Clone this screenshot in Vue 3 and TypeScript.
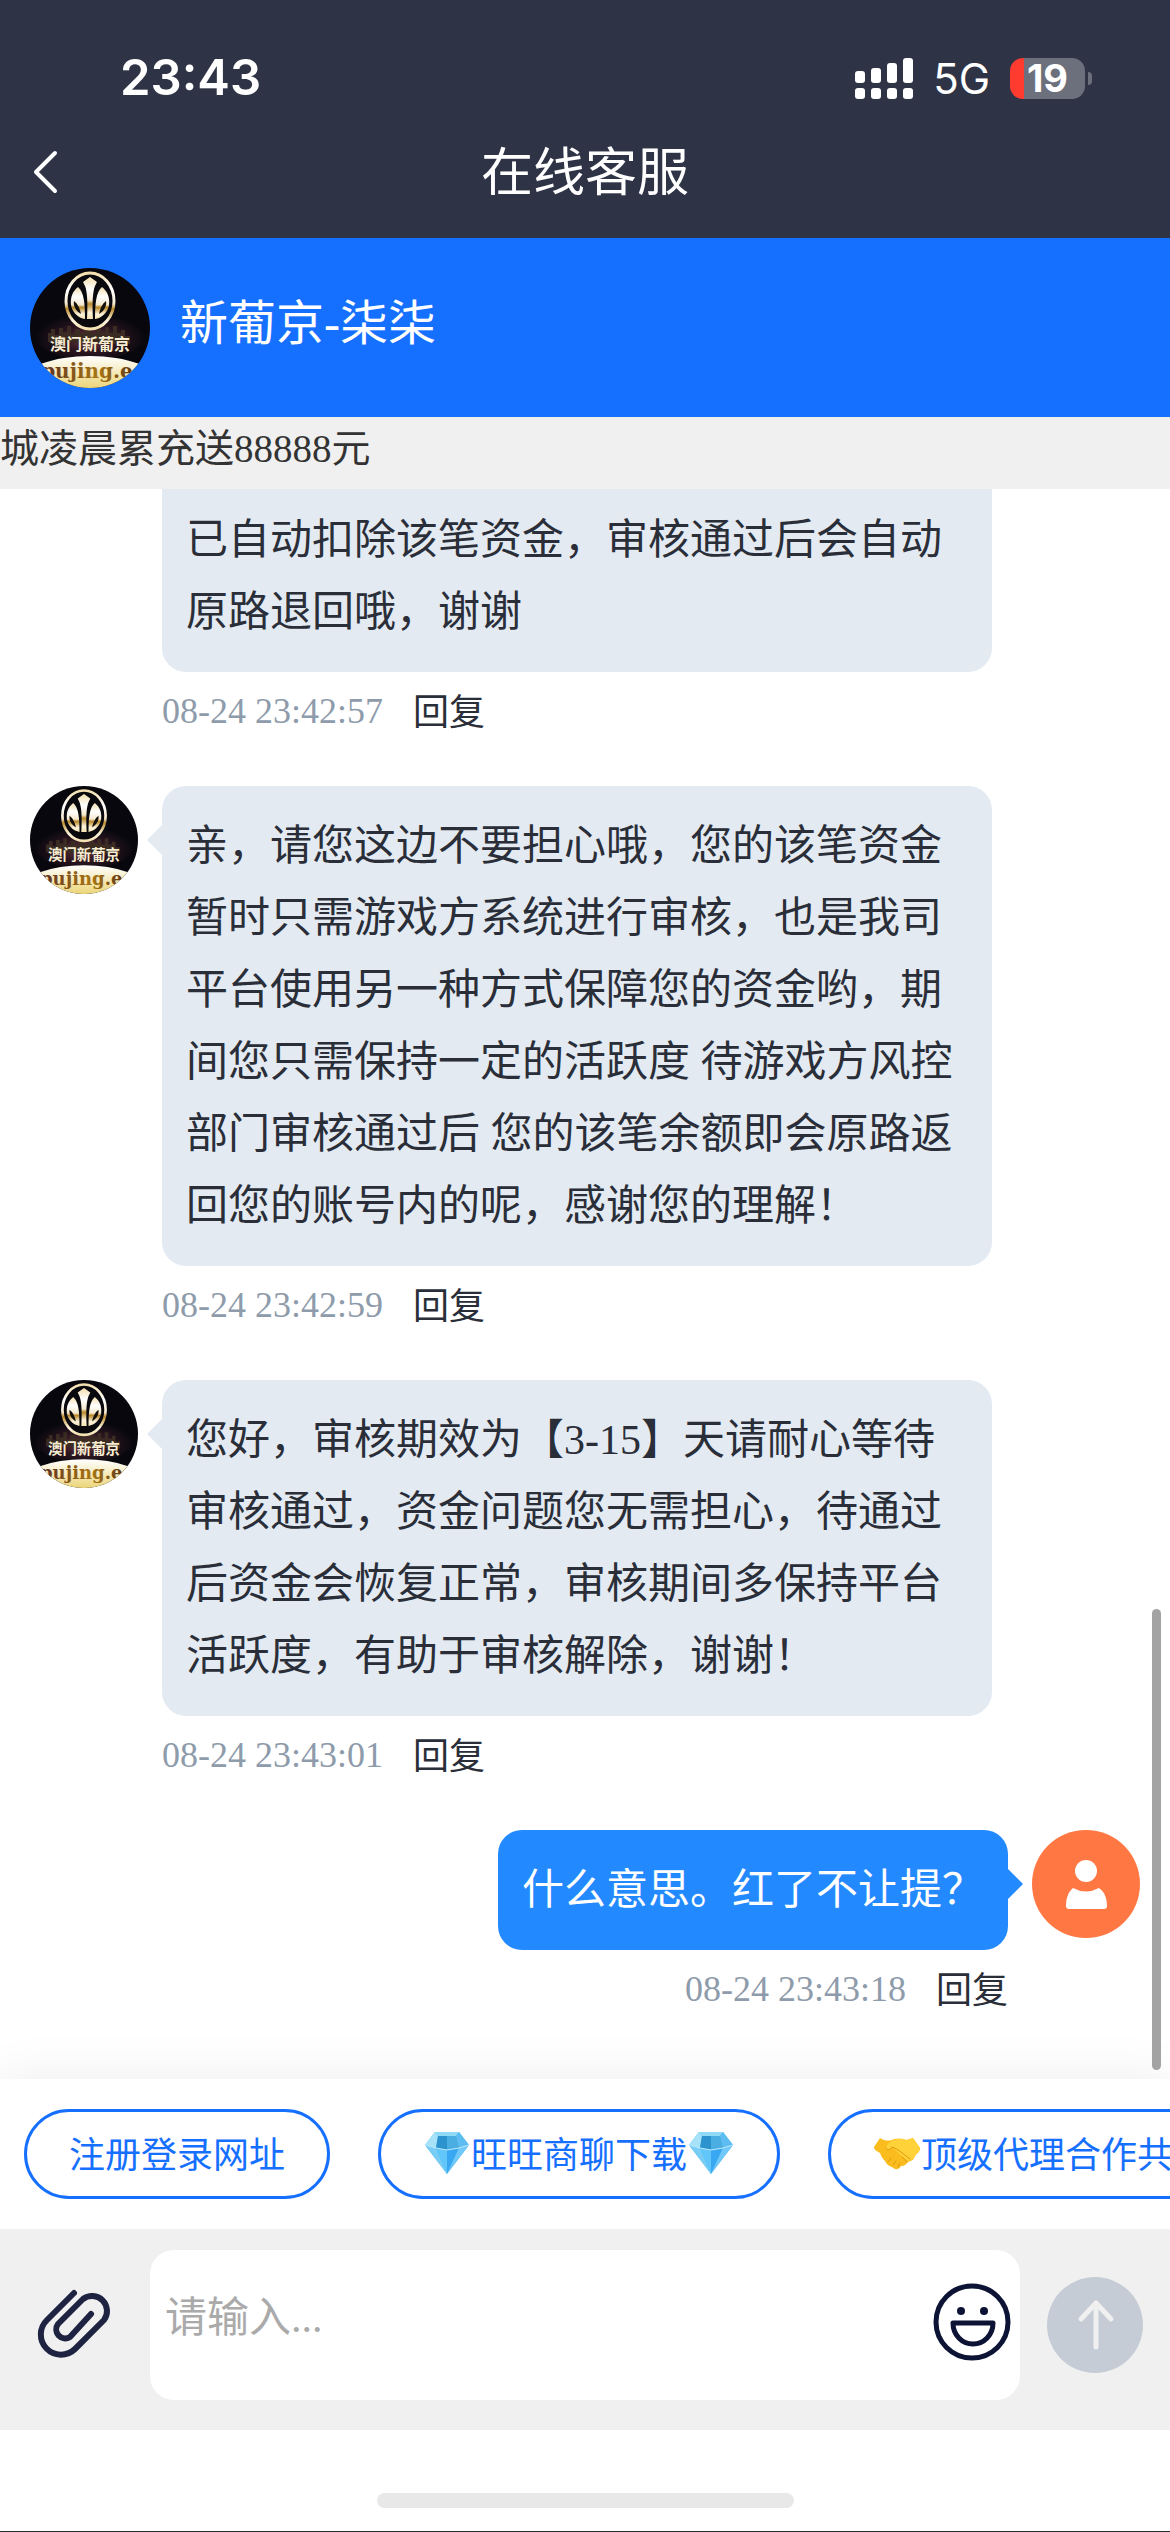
<script setup lang="ts">
import { ref } from 'vue'

interface Message {
  id: number
  own: boolean
  clipped?: boolean
  text: string
  time: string
}

const messages: Message[] = [
  { id: 1, own: false, clipped: true, text: '已自动扣除该笔资金，审核通过后会自动原路退回哦，谢谢', time: '08-24 23:42:57' },
  {
    id: 2,
    own: false,
    text: '亲，请您这边不要担心哦，您的该笔资金暂时只需游戏方系统进行审核，也是我司平台使用另一种方式保障您的资金哟，期间您只需保持一定的活跃度 待游戏方风控部门审核通过后 您的该笔余额即会原路返回您的账号内的呢，感谢您的理解！',
    time: '08-24 23:42:59',
  },
  {
    id: 3,
    own: false,
    text: '您好，审核期效为【3-15】天请耐心等待审核通过，资金问题您无需担心，待通过后资金会恢复正常，审核期间多保持平台活跃度，有助于审核解除，谢谢！',
    time: '08-24 23:43:01',
  },
  { id: 4, own: true, text: '什么意思。红了不让提？', time: '08-24 23:43:18' },
]

const draft = ref('')
</script>

<template>
  <div class="page">
    <!-- Shared artwork -->
    <svg class="defs" aria-hidden="true">
      <defs>
        <linearGradient id="gold" x1="0" y1="0" x2="0" y2="1">
          <stop offset="0" stop-color="#f3dfae" />
          <stop offset="0.3" stop-color="#ffffff" />
          <stop offset="0.55" stop-color="#f6ead0" />
          <stop offset="0.64" stop-color="#b98a2c" />
          <stop offset="0.85" stop-color="#fdf4dc" />
          <stop offset="1" stop-color="#f3e2b0" />
        </linearGradient>
        <linearGradient id="dome" x1="0" y1="0" x2="0" y2="1">
          <stop offset="0" stop-color="#ffffff" />
          <stop offset="0.6" stop-color="#ecd67c" />
        </linearGradient>
        <linearGradient id="lettering" x1="0" y1="0" x2="1" y2="0">
          <stop offset="0" stop-color="#5a2c22" />
          <stop offset="0.55" stop-color="#a87612" />
          <stop offset="1" stop-color="#4a2418" />
        </linearGradient>
        <radialGradient id="glow" cx="0.5" cy="0.6" r="0.5">
          <stop offset="0" stop-color="#6b3540" />
          <stop offset="0.5" stop-color="#2c1620" />
          <stop offset="1" stop-color="#07070d" />
        </radialGradient>
        <clipPath id="disc"><circle cx="60" cy="60" r="60" /></clipPath>
        <symbol id="brand" viewBox="0 0 120 120">
          <g clip-path="url(#disc)">
            <rect width="120" height="120" fill="#07070d" />
            <ellipse cx="60" cy="66" rx="56" ry="26" fill="url(#glow)" />
            <path d="M18 74V65h3v-4h4v6h4v-7h4v4h4v-6h4v8h4v-5h5v4h5v-6h6v6h5v-4h5v3h4v-5h4v6h4v-7h4v7h4v-3h4v6h5v8z" fill="#3a2c22" />
            <ellipse cx="60" cy="33" rx="24" ry="28" fill="#08080d" stroke="url(#gold)" stroke-width="3" />
            <path d="M60 9l7 5-2 4c-2 5-3 15-2 33h-6c1-18 0-28-2-33l-2-4z" fill="url(#gold)" />
            <path d="M48 19c6 5 7 17 7 32-7-1-13-7-14-14-1-8 2-14 7-18z" fill="url(#gold)" />
            <path d="M72 19c-6 5-7 17-7 32 7-1 13-7 14-14 1-8-2-14-7-18z" fill="url(#gold)" />
            <path d="M44 33c4 3 6 8 7 13-5-3-8-8-7-13zM76 33c-4 3-6 8-7 13 5-3 8-8 7-13z" fill="#15100a" />
            <text x="60" y="82" class="brand-name">澳门新葡京</text>
            <ellipse cx="60" cy="114" rx="68" ry="26" fill="url(#dome)" />
            <text x="63" y="110" class="brand-site">pujing.ec</text>
          </g>
        </symbol>
        <symbol id="gem" viewBox="0 0 48 48">
          <path d="M12 4H36L46 17 24 46 2 17z" fill="#4db9f5" />
          <path d="M12 4H36L33 8H15z" fill="#8fd9f7" />
          <path d="M12 4L15 8 13 20 2 17z" fill="#a6e2f8" />
          <path d="M15 8H33L36 20 24 22 13 20z" fill="#2d93cf" />
          <path d="M24 8l9 0 3 12-12 2z" fill="#4aaee3" />
          <path d="M36 4L46 17 36 20 33 8z" fill="#5dbdf0" />
          <path d="M2 17l11 3 11 26z" fill="#77cdf6" />
          <path d="M13 20l11 2v24z" fill="#63c6fb" />
          <path d="M36 20l-12 2v24z" fill="#38a8f2" />
          <path d="M46 17l-10 3-12 26z" fill="#6fc8f7" />
          <path d="M2 17l11 3 11 2 12-2 10-3" fill="none" stroke="#bdeaff" stroke-width="1" />
        </symbol>
        <symbol id="handshake" viewBox="0 0 48 48">
          <path d="M1 19L7 10c5 3 8 3 12 2 4-2 9-1 14 0l7-2 7 10c0 4-3 5-5 8-1 4-4 5-7 6-3 4-5 4-7 4-3 5-7 3-9 1-4-1-6-4-7-6-3-3-4-5-5-8-3-2-6-3-6-6z" fill="#fbbd1e" />
          <path d="M34 12l6-2 7 10c0 4-3 5-5 8-1 3-4 5-7 5-6-5-12-10-16-14-2 3-5 4-6 1 1-4 4-7 8-8 5-2 8-1 13 0z" fill="#ffd23a" />
          <path d="M13 20c1 3 4 2 6-1 6 2 14 9 18 12" fill="none" stroke="#dd960f" stroke-width="1" stroke-linecap="round" />
          <path d="M15 34l3-4M20 37l3-4M25 39l2-4M29 29l5 5" stroke="#e09a12" stroke-width="1" stroke-linecap="round" />
        </symbol>
      </defs>
    </svg>

    <header class="top">
      <div class="status">
        <span class="clock">23:43</span>
        <div class="indicators">
          <svg class="signal" viewBox="0 0 58 41" aria-hidden="true">
            <g fill="#fff">
              <rect x="0" y="13" width="10" height="12" rx="3" />
              <rect x="16" y="10" width="10" height="15" rx="3" />
              <rect x="32" y="5" width="10" height="20" rx="3" />
              <rect x="48" y="0" width="10" height="25" rx="3" />
              <rect x="0" y="30" width="10" height="11" rx="3" />
              <rect x="16" y="30" width="10" height="11" rx="3" />
              <rect x="32" y="30" width="10" height="11" rx="3" />
              <rect x="48" y="30" width="10" height="11" rx="3" />
            </g>
          </svg>
          <span class="network">5G</span>
          <div class="battery"><span class="level">19</span></div>
        </div>
      </div>
      <nav class="titlebar">
        <button class="back" type="button" aria-label="返回">
          <svg viewBox="0 0 24 42" aria-hidden="true">
            <path d="M22 2L3 21l19 19" fill="none" stroke="#fff" stroke-width="4" stroke-linecap="round" stroke-linejoin="round" />
          </svg>
        </button>
        <h1>在线客服</h1>
      </nav>
    </header>

    <section class="agent">
      <svg class="agent-avatar" aria-hidden="true"><use href="#brand" /></svg>
      <h2>新葡京-柒柒</h2>
    </section>

    <p class="notice">城凌晨累充送88888元</p>

    <main class="chat">
      <article v-for="m in messages" :key="m.id" class="message" :class="{ own: m.own, clipped: m.clipped }">
        <div class="avatar">
          <svg v-if="m.own" viewBox="0 0 108 108" aria-hidden="true">
            <circle cx="54" cy="54" r="54" fill="#ff7742" />
            <circle cx="54" cy="41" r="11" fill="#fff" />
            <path d="M41 58Q54 65 67 58C73 62 75 69 75 76Q75 79 72 79H37Q34 79 34 76C34 69 36 62 41 58Z" fill="#fff" />
          </svg>
          <svg v-else-if="!m.clipped" aria-hidden="true"><use href="#brand" /></svg>
        </div>
        <div class="body">
          <p class="bubble">{{ m.text }}</p>
          <div class="meta">
            <time>{{ m.time }}</time>
            <button type="button">回复</button>
          </div>
        </div>
      </article>
      <div class="scrollbar"></div>
    </main>

    <div class="quick">
      <button type="button">注册登录网址</button>
      <button type="button">
        <svg class="emoji" aria-hidden="true"><use href="#gem" /></svg>旺旺商聊下载<svg class="emoji" aria-hidden="true"><use href="#gem" /></svg>
      </button>
      <button type="button">
        <svg class="emoji" aria-hidden="true"><use href="#handshake" /></svg>顶级代理合作共
      </button>
    </div>

    <form class="composer" @submit.prevent>
      <button class="attach" type="button" aria-label="附件">
        <svg viewBox="0 0 76 76" aria-hidden="true">
          <path d="M37 6L10 33A20 20 0 0 0 38 62L67 33A15 15 0 0 0 46 12L21 37A9 9 0 0 0 33 50L54 27" fill="none" stroke="#1d2340" stroke-width="6" stroke-linecap="round" stroke-linejoin="round" />
        </svg>
      </button>
      <div class="field">
        <textarea v-model="draft" placeholder="请输入..." aria-label="消息内容"></textarea>
        <button class="smile" type="button" aria-label="表情">
          <svg viewBox="-39 -36 78 78" aria-hidden="true">
            <circle r="36" fill="none" stroke="#0c1334" stroke-width="5" />
            <circle cx="-11" cy="-11" r="4" fill="#0c1334" />
            <circle cx="12" cy="-11" r="4" fill="#0c1334" />
            <path d="M-19 1H21C21 13 12 22 1 22S-19 13-19 1Z" fill="none" stroke="#0c1334" stroke-width="5" stroke-linejoin="round" />
          </svg>
        </button>
      </div>
      <button class="send" type="submit" aria-label="发送">
        <svg viewBox="0 0 96 96" aria-hidden="true">
          <path d="M49 26V70M34 42L49 26L64 42" fill="none" stroke="#f0f0f0" stroke-width="5" stroke-linecap="round" stroke-linejoin="round" />
        </svg>
      </button>
    </form>

    <footer class="home"><span class="handle"></span></footer>
  </div>
</template>

<style>
body {
  margin: 0;
  background: #fff;
}
</style>

<style scoped>
.page {
  display: flex;
  flex-direction: column;
  min-height: 100vh;
  overflow: hidden;
  box-sizing: border-box;
  border-bottom: 1px solid #2b2a33;
  background: #fff;
  color: #2a2e38;
  font-family: 'Liberation Serif', 'Noto Sans CJK SC', serif;
  font-size: 42px;
}

.page * {
  box-sizing: border-box;
}

.defs {
  position: absolute;
  width: 0;
  height: 0;
}

svg {
  display: block;
  overflow: visible;
}

button {
  margin: 0;
  padding: 0;
  border: 0;
  background: none;
  color: inherit;
  font: inherit;
}

h1,
h2,
p {
  margin: 0;
  font-weight: 400;
}

.brand-name {
  fill: #f7edd2;
  font-family: 'Noto Sans CJK SC', sans-serif;
  font-size: 16px;
  font-weight: 700;
  text-anchor: middle;
}

.brand-site {
  fill: url(#lettering);
  font-family: 'DejaVu Serif', serif;
  font-size: 20px;
  font-weight: 700;
  text-anchor: middle;
}

.top {
  background: #2e3346;
  color: #fff;
}

.status {
  display: flex;
  align-items: center;
  justify-content: space-between;
  height: 106px;
  padding: 50px 78px 0 120px;
  font-family: Inter, sans-serif;
}

.clock {
  font-size: 49px;
  font-weight: 600;
  line-height: 56px;
}

.indicators {
  display: flex;
  align-items: center;
  gap: 20px;
}

.signal {
  width: 58px;
  height: 41px;
}

.network {
  padding-top: 2px;
  font-size: 42px;
  line-height: 56px;
}

.battery {
  position: relative;
  width: 75px;
  height: 41px;
  margin-right: 7px;
  border-radius: 13px;
  background: linear-gradient(to right, #ff3b30 14px, #6c707d 14px);
  text-align: center;
}

.battery::after {
  content: '';
  position: absolute;
  top: 14px;
  right: -7px;
  width: 4px;
  height: 13px;
  border-radius: 0 4px 4px 0;
  background: #6c707d;
}

.level {
  display: block;
  font-size: 38px;
  font-weight: 700;
  line-height: 41px;
}

.titlebar {
  display: grid;
  grid-template-columns: 1fr auto 1fr;
  align-items: center;
  height: 132px;
}

.back {
  justify-self: start;
  padding: 0 33px;
}

.back svg {
  width: 24px;
  height: 42px;
}

h1 {
  padding-top: 4px;
  font-size: 52px;
  line-height: 76px;
}

.agent {
  display: flex;
  align-items: center;
  gap: 30px;
  height: 179px;
  padding: 0 30px;
  background: #1670ff;
  color: #fff;
}

.agent-avatar {
  width: 120px;
  height: 120px;
}

h2 {
  padding-bottom: 8px;
  font-size: 48px;
  line-height: 72px;
}

.notice {
  height: 72px;
  overflow: hidden;
  background: #f0f0f0;
  color: #333;
  font-size: 39px;
  line-height: 64px;
  white-space: nowrap;
}

.chat {
  position: relative;
  flex: 1;
  display: flex;
  flex-direction: column;
  gap: 36px;
  padding: 0 30px 51px;
}

.message {
  display: flex;
  gap: 24px;
  padding-right: 148px;
}

.message.own {
  flex-direction: row-reverse;
  padding-right: 0;
  padding-left: 148px;
}

.avatar {
  flex: none;
  width: 108px;
}

.avatar svg {
  width: 108px;
  height: 108px;
}

.body {
  display: flex;
  flex-direction: column;
  align-items: flex-start;
}

.own .body {
  align-items: flex-end;
}

.bubble {
  position: relative;
  padding: 24px;
  border-radius: 24px;
  background: #e3eaf2;
  line-height: 72px;
}

.bubble::before {
  content: '';
  position: absolute;
  top: 39px;
  left: -15px;
  border: 15px solid transparent;
  border-left-width: 0;
  border-right-color: #e3eaf2;
}

.clipped .bubble {
  padding-top: 15px;
  border-radius: 0 0 24px 24px;
}

.clipped .bubble::before {
  display: none;
}

.own .bubble {
  background: #2389ff;
  color: #fff;
}

.own .bubble::before {
  right: -15px;
  left: auto;
  border-width: 15px 0 15px 15px;
  border-left-color: #2389ff;
}

.meta {
  display: flex;
  align-items: center;
  gap: 30px;
  height: 78px;
  font-size: 36px;
}

.meta time {
  color: #8e9bab;
}

.meta button {
  padding-bottom: 4px;
}

.scrollbar {
  position: absolute;
  right: 9px;
  bottom: 9px;
  width: 9px;
  height: 29%;
  border-radius: 5px;
  background: #a3a3a3;
}

.quick {
  display: flex;
  align-items: center;
  gap: 48px;
  height: 150px;
  padding: 0 24px;
  background: #fff;
  box-shadow: 0 0 48px rgba(0, 0, 0, 0.08);
}

.quick button {
  flex: none;
  display: flex;
  align-items: center;
  height: 90px;
  padding: 0 42px 4px;
  border: 3px solid #1670ff;
  border-radius: 45px;
  color: #1670ff;
  font-size: 36px;
  white-space: nowrap;
}

.emoji {
  width: 48px;
  height: 48px;
}

.composer {
  position: relative;
  display: flex;
  align-items: center;
  height: 201px;
  padding-bottom: 9px;
  background: #f0f0f0;
}

.attach {
  display: flex;
  justify-content: center;
  width: 150px;
}

.attach svg {
  width: 76px;
  height: 76px;
}

.field {
  flex: 1;
  display: flex;
  align-items: center;
  height: 150px;
  padding-right: 9px;
  border-radius: 24px;
  background: #fff;
}

textarea {
  flex: 1;
  min-width: 0;
  height: 150px;
  padding: 38px 15px 0;
  border: 0;
  outline: 0;
  resize: none;
  background: none;
  color: inherit;
  font: inherit;
  line-height: 60px;
}

textarea::placeholder {
  color: #aaa;
}

.smile svg {
  width: 78px;
  height: 78px;
}

.send {
  width: 96px;
  height: 96px;
  margin: 0 27px;
  border-radius: 50%;
  background: #c5ccd5;
}

.home {
  position: relative;
  display: flex;
  align-items: flex-end;
  justify-content: center;
  height: 101px;
  padding-bottom: 23px;
  background: #fff;
}

.handle {
  width: 417px;
  height: 15px;
  border-radius: 8px;
  background: #e8e8e8;
}
</style>
